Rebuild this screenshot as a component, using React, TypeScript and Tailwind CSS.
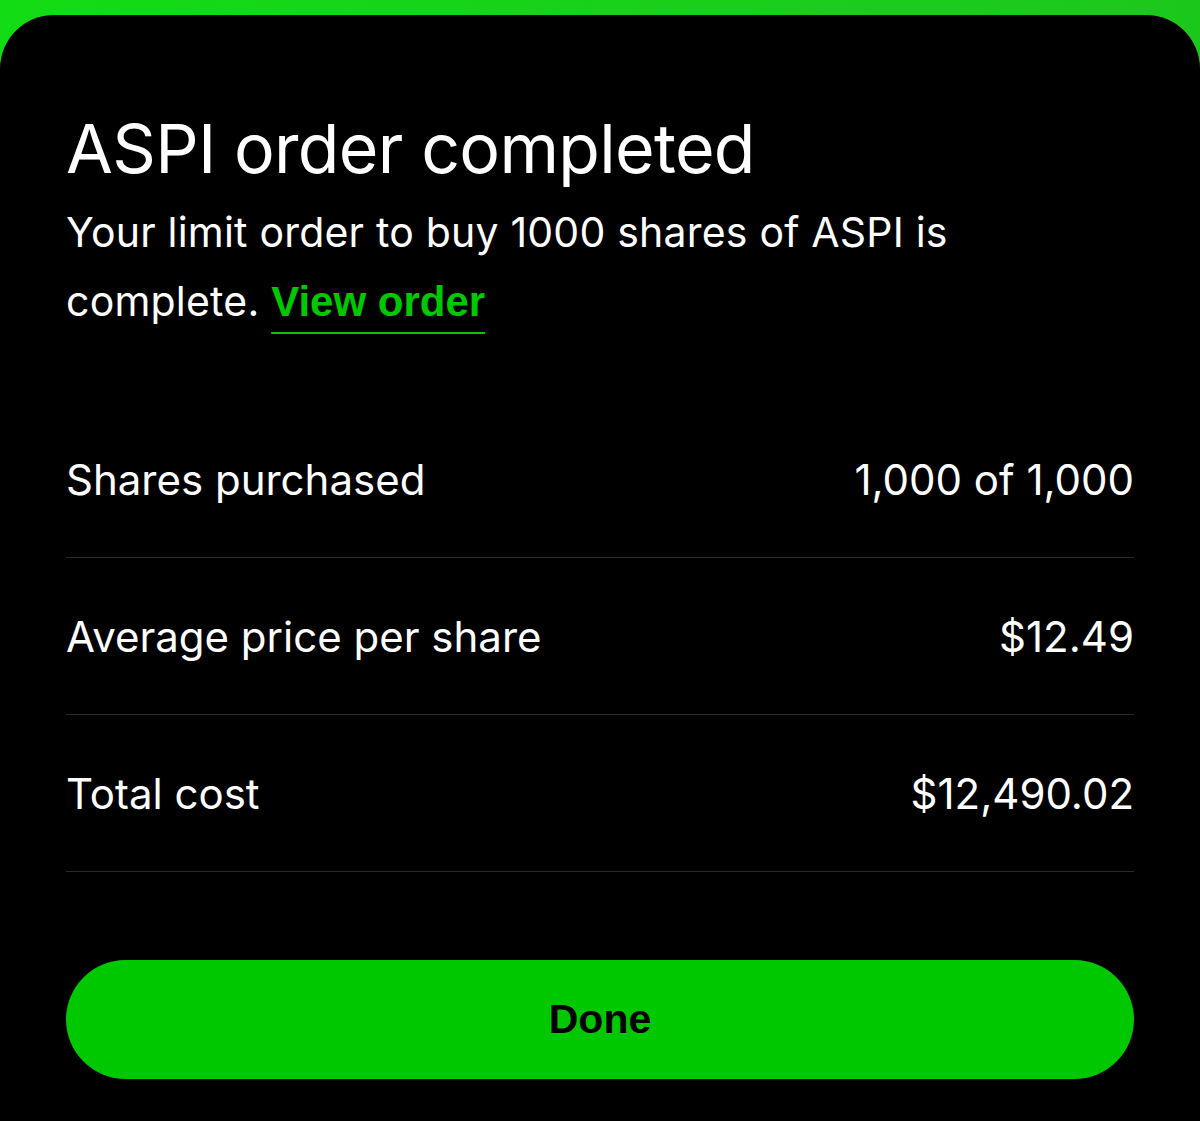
const rows = [
  { label: "Shares purchased", value: "1,000 of 1,000" },
  { label: "Average price per share", value: "$12.49" },
  { label: "Total cost", value: "$12,490.02" },
];

export default function App() {
  return (
    <div className="h-[1121px] w-[1200px] overflow-hidden bg-gradient-to-r from-[#12dc14] to-[#1cc71c] pt-[15px] font-['Inter',sans-serif] text-white">
      <div className="flex h-full flex-col rounded-t-[54px] bg-black px-[66px] pt-[99px]">
        <h1 className="text-[68px] font-normal leading-none tracking-[-0.01em]">
          ASPI order completed
        </h1>
        <p className="mt-[16px] max-w-[900px] text-[41px] leading-[69px] tracking-[0.005em]">
          Your limit order to buy 1000 shares of ASPI is complete.{" "}
          <a
            href="#"
            className="font-['Liberation_Sans',sans-serif] text-[42px] font-bold tracking-normal text-[#00c800] underline decoration-2 underline-offset-[16px]"
          >
            View order
          </a>
        </p>

        <div className="mt-[65px]">
          {rows.map((r) => (
            <div
              key={r.label}
              className="flex items-center justify-between border-b border-[#2a2a2a] pb-[52px] pt-[54px] text-[42px] leading-[50px]"
            >
              <span>{r.label}</span>
              <span>{r.value}</span>
            </div>
          ))}
        </div>

        <button className="mt-[88px] h-[119px] w-full rounded-full bg-[#00c800] font-['Liberation_Sans',sans-serif] text-[41px] font-bold text-black">
          Done
        </button>
      </div>
    </div>
  );
}
